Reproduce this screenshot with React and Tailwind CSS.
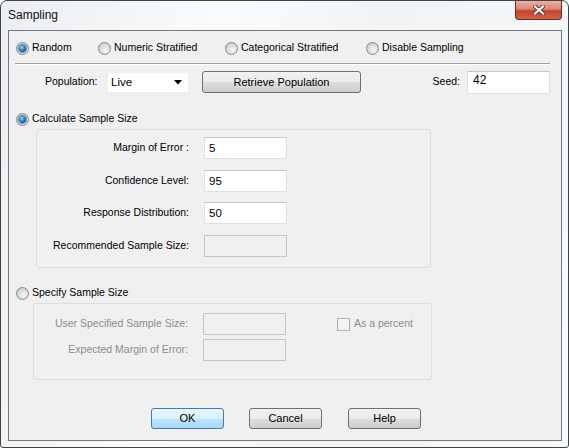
import React from "react";

// Win7-style radio button
function Radio({ checked }) {
  return (
    <span className="flex h-[13px] w-[13px] shrink-0 items-center justify-center rounded-full border border-[#858a8e] bg-[radial-gradient(circle_at_60%_65%,#f6f6f6,#d9d9d9_55%,#bdbdbd)]">
      {checked && (
        <span className="h-[7px] w-[7px] rounded-full bg-[radial-gradient(circle_at_40%_35%,#8fd3f7,#1f72b0_55%,#0a365f)] shadow-[0_0_0_1px_#5b8cb3]" />
      )}
    </span>
  );
}

function RadioItem({ label, checked, width }) {
  return (
    <div className="flex items-center" style={width ? { width } : undefined}>
      <Radio checked={checked} />
      <span className="ml-[3px]">{label}</span>
    </div>
  );
}

function TextBox({ value, disabled, className = "" }) {
  return (
    <div
      className={`h-[22px] w-[83px] border pl-[4px] pt-[3px] text-[11.5px] leading-[14px] ${
        disabled
          ? "border-[#c4c7c9] bg-[#f0f0f0]"
          : "border-[#dde1e7] border-t-[#c3c7cd] bg-white"
      } ${className}`}
    >
      {value}
    </div>
  );
}

function FieldRow({ label, value, disabled, labelW, muted, className = "" }) {
  return (
    <div className={`flex items-center ${className}`}>
      <span
        className={`text-right ${muted ? "text-[#8d8d8d]" : ""}`}
        style={{ width: labelW }}
      >
        {label}
      </span>
      <TextBox value={value} disabled={disabled} className="ml-[15px]" />
    </div>
  );
}

const btn =
  "flex h-[21px] w-[73px] items-center justify-center rounded-[3px] border text-[11px]";
const grayBtn =
  "border-[#707070] bg-[linear-gradient(#f2f2f2_0%,#ebebeb_50%,#dddddd_51%,#cfcfcf_100%)]";

export default function App() {
  return (
    <div className="h-[448px] w-[569px] overflow-hidden bg-white font-['Liberation_Sans',Arial,sans-serif] text-[10.5px] text-black">
      <div className="flex h-[448px] w-[569px] flex-col rounded-t-[7px] rounded-b-[3px] border border-[#3f4448] bg-[linear-gradient(100deg,#eceef1,#fafbfc_35%,#f1f3f5_60%,#f8f9fa)]">
        {/* Title bar */}
        <div className="flex h-[29px] items-start justify-between">
          <span className="ml-[7px] mt-[7px] text-[12px] leading-[14px] text-[#111]">
            Sampling
          </span>
          <button className="mr-[6px] flex h-[19px] w-[47px] items-center justify-center rounded-b-[4px] border border-t-0 border-[#6b2a22] bg-[linear-gradient(#eab2a4_0%,#d98672_45%,#c4432b_55%,#d2634b_100%)]">
            <svg width="12" height="10" viewBox="0 0 12 10">
              <path
                d="M2 1.5 L10 8.5 M10 1.5 L2 8.5"
                stroke="#5a2a22"
                strokeWidth="3.8"
                strokeLinecap="square"
              />
              <path
                d="M2 1.5 L10 8.5 M10 1.5 L2 8.5"
                stroke="#ffffff"
                strokeWidth="2.2"
                strokeLinecap="square"
              />
            </svg>
          </button>
        </div>

        {/* Client area */}
        <div className="ml-[7px] flex h-[411px] w-[554px] flex-col border border-[#75797d] bg-[#f0f0f0]">
          {/* Sampling method */}
          <div className="ml-[7px] mt-[7px] flex h-[20px] items-center">
            <RadioItem label="Random" checked width={82} />
            <RadioItem label="Numeric Stratified" width={127} />
            <RadioItem label="Categorical Stratified" width={141} />
            <RadioItem label="Disable Sampling" />
          </div>

          <div className="ml-[6px] mt-[5px] h-[2px] w-[535px] border-t border-b border-t-[#a0a0a0] border-b-white" />

          {/* Population row */}
          <div className="mt-[5px] flex h-[24px] items-center pr-[11px]">
            <span className="ml-[36px] w-[62px]">Population:</span>
            <div className="flex h-[21px] w-[82px] items-start justify-between border border-[#eef0f3] bg-white pl-[3px] pr-[6px] pt-[1px] text-[11.5px]">
              <span>Live</span>
              <svg width="8" height="5" viewBox="0 0 8 5" className="mt-[6px]">
                <path d="M0 0 H8 L4 4.5 Z" fill="#000" />
              </svg>
            </div>
            <button className={`ml-[13px] h-[22px] w-[159px] ${btn} ${grayBtn}`}>
              Retrieve Population
            </button>
            <div className="flex-1" />
            <span>Seed:</span>
            <div className="ml-[7px] h-[23px] w-[83px] border border-[#dde1e7] border-t-[#c3c7cd] bg-white pl-[5px] pt-[1px] text-[12px] leading-[15px]">
              42
            </div>
          </div>

          {/* Calculate sample size */}
          <div className="ml-[7px] mt-[17px] flex h-[16px] items-center">
            <RadioItem label="Calculate Sample Size" checked />
          </div>
          <div className="ml-[27px] mt-[2px] flex h-[139px] w-[395px] flex-col rounded-[3px] border border-[#d5dfe5] pt-[7px]">
            <FieldRow label="Margin of Error :" value="5" labelW={152} />
            <FieldRow label="Confidence Level:" value="95" labelW={152} className="mt-[11px]" />
            <FieldRow label="Response Distribution:" value="50" labelW={152} className="mt-[10px]" />
            <FieldRow label="Recommended Sample Size:" labelW={152} disabled className="mt-[11px]" />
          </div>

          {/* Specify sample size */}
          <div className="ml-[7px] mt-[17px] flex h-[16px] items-center">
            <RadioItem label="Specify Sample Size" />
          </div>
          <div className="ml-[24px] mt-[2px] flex h-[77px] w-[399px] flex-col rounded-[3px] border border-[#d5dfe5] pt-[9px]">
            <div className="flex items-center">
              <FieldRow label="User Specified Sample Size:" labelW={154} disabled muted />
              <span className="ml-[51px] h-[13px] w-[13px] border border-[#b1b1b1] bg-[#f4f4f4]" />
              <span className="ml-[4px] text-[#8d8d8d]">As a percent</span>
            </div>
            <FieldRow
              label="Expected Margin of Error:"
              labelW={154}
              disabled
              muted
              className="mt-[4px]"
            />
          </div>

          {/* Dialog buttons */}
          <div className="ml-[142px] mt-[28px] flex">
            <button className={`${btn} border-[#3c7fb1] bg-[linear-gradient(#eaf6fd_0%,#d9f0fc_50%,#bee6fd_51%,#a7d9f5_100%)]`}>
              OK
            </button>
            <button className={`ml-[25px] ${btn} ${grayBtn}`}>Cancel</button>
            <button className={`ml-[26px] ${btn} ${grayBtn}`}>Help</button>
          </div>
        </div>
      </div>
    </div>
  );
}
